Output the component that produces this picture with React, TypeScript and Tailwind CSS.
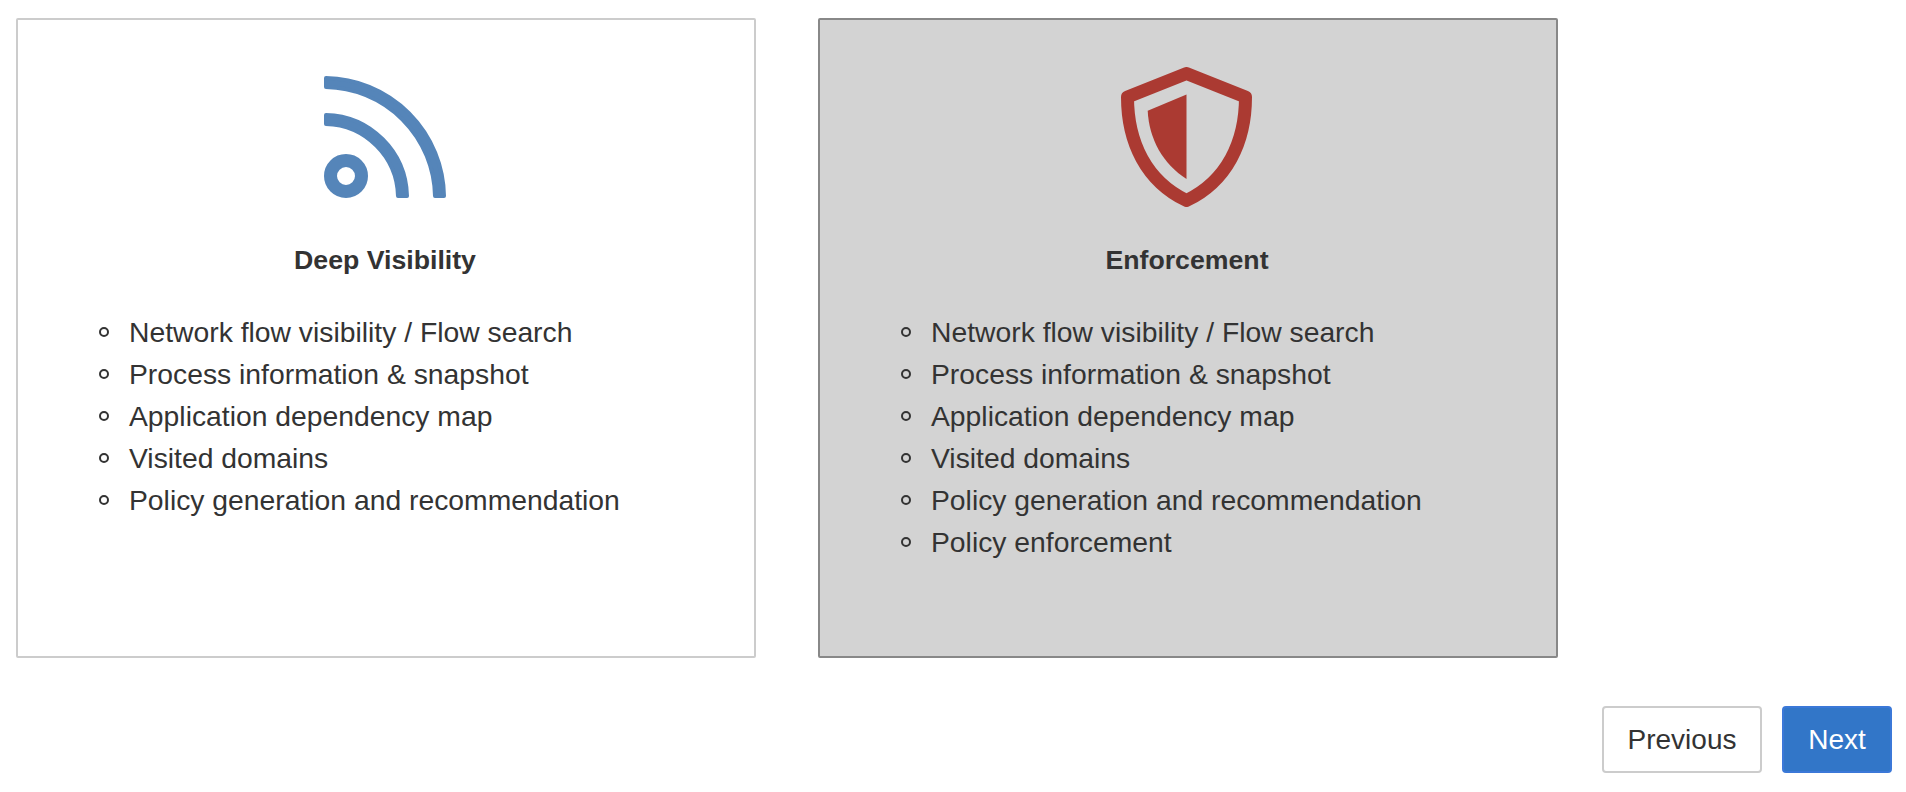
const features = [
  "Network flow visibility / Flow search",
  "Process information & snapshot",
  "Application dependency map",
  "Visited domains",
  "Policy generation and recommendation",
];

const RssIcon = () => (
  <svg viewBox="0 0 122 122" className="mr-[2px] h-[122px] w-[122px]" fill="#5585b9" stroke="#5585b9" strokeWidth="4" strokeLinejoin="round">
    <path d="M2 2A120 120 0 0 1 120 120L111 120A111 111 0 0 0 2 11Z" />
    <path d="M2 39A83 83 0 0 1 83 120L74 120A74 74 0 0 0 2 48Z" />
    <circle cx="22" cy="100" r="15.500" fill="none" strokeWidth="13" />
  </svg>
);

const ShieldIcon = () => (
  <svg viewBox="0 0 131 140" className="mr-[3px] h-[140px] w-[131px]" fill="none">
    <path
      d="M65.500 6.500L6.500 30C6.500 75 25 114 65.500 133.500C106 114 124.500 75 124.500 30Z"
      stroke="#ab3a32"
      strokeWidth="13"
      strokeLinejoin="round"
    />
    <path d="M65.500 27.500L26.700 43.700C28 72 42 97 65.500 112Z" fill="#ab3a32" />
  </svg>
);

const Card = ({
  icon,
  title,
  items,
  selected = false,
}: {
  icon: React.ReactNode;
  title: string;
  items: string[];
  selected?: boolean;
}) => (
  <div
    className={
      selected
        ? "h-[640px] w-[740px] rounded-[2px] border-2 border-[#888888] bg-[#d3d3d3]"
        : "h-[640px] w-[740px] rounded-[2px] border-2 border-[#cccccc] bg-white"
    }
  >
    <div className="mt-[47px] flex h-[140px] items-center justify-center">{icon}</div>
    <h3 className="mt-[35px] pr-[2px] text-center text-[26.7px] leading-[36px] font-bold text-[#333333]">{title}</h3>
    <ul className="mt-[33px] pl-[81px] text-[28.3px] leading-[42px] text-[#333333]">
      {items.map((item) => (
        <li key={item} className="flex items-center gap-[20px]">
          <span className="h-[10px] w-[10px] rounded-full border-2 border-[#333333]" />
          {item}
        </li>
      ))}
    </ul>
  </div>
);

export default function App() {
  return (
    <div className="h-[792px] w-[1906px] overflow-hidden bg-white pt-[18px] pl-[16px] font-['Liberation_Sans',Arial,sans-serif]">
      <div className="flex gap-[62px]">
        <Card icon={<RssIcon />} title="Deep Visibility" items={features} />
        <Card icon={<ShieldIcon />} title="Enforcement" items={[...features, "Policy enforcement"]} selected />
      </div>
      <div className="mt-[48px] flex justify-end gap-[20px] pr-[14px]">
        <button className="h-[67px] w-[160px] rounded-[4px] border-2 border-[#cccccc] bg-white text-[28px] text-[#333333]">
          Previous
        </button>
        <button className="h-[67px] w-[110px] rounded-[4px] border-2 border-[#3b78d8] bg-[#3276c8] text-[28px] text-white">
          Next
        </button>
      </div>
    </div>
  );
}
